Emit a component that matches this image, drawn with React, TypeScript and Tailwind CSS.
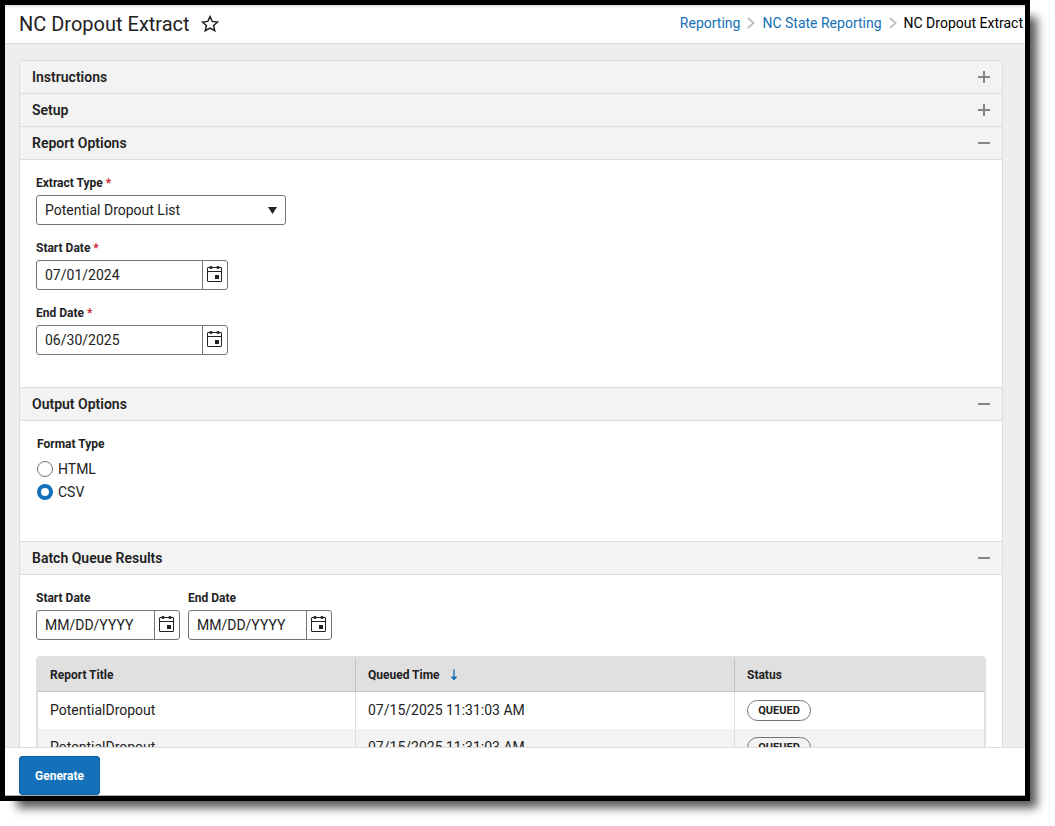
import { useState } from "react";
import type { ReactNode } from "react";

interface BatchRow {
  id: number;
  title: string;
  queued: string;
  status: string;
}

const rows: BatchRow[] = [
  { id: 1, title: "PotentialDropout", queued: "07/15/2025 11:31:03 AM", status: "QUEUED" },
  { id: 2, title: "PotentialDropout", queued: "07/15/2025 11:31:03 AM", status: "QUEUED" },
];

function StarIcon() {
  return (
    <svg viewBox="0 0 18 18" className="h-[18px] w-[18px]" fill="none" stroke="#222" strokeWidth="1.5">
      <path d="M9 1.6 L11.2 6.4 L16.6 7 L12.6 10.5 L13.7 15.7 L9 13 L4.3 15.7 L5.4 10.5 L1.4 7 L6.8 6.4 Z" />
    </svg>
  );
}

function ChevronIcon() {
  return (
    <svg viewBox="0 0 8 12" className="h-3 w-2" fill="none" stroke="#bdbdbd" strokeWidth="1.8">
      <path d="M1 1 L6.5 6 L1 11" />
    </svg>
  );
}

function CalendarIcon() {
  return (
    <svg viewBox="0 0 15 16" className="h-4 w-[15px]">
      <rect x="0.5" y="1.5" width="14" height="14" rx="0.5" fill="none" stroke="#222" />
      <path d="M0 5.5 H15" stroke="#222" />
      <path d="M4 0 V3 M11 0 V3" stroke="#222" strokeWidth="1.4" />
      <path d="M2.5 1.5 H5.5 M9.5 1.5 H12.5" stroke="#222" strokeWidth="1.8" />
      <rect x="8" y="9" width="4" height="4" fill="#222" />
    </svg>
  );
}

function ToggleIcon({ open }: { open: boolean }) {
  return (
    <svg viewBox="0 0 12 12" className="h-3 w-3" stroke="#858585" strokeWidth="2">
      <path d="M0 6 H12" />
      {!open && <path d="M6 0 V12" />}
    </svg>
  );
}

interface SectionProps {
  title: string;
  defaultOpen?: boolean;
  children?: ReactNode;
}

function Section({ title, defaultOpen = false, children }: SectionProps) {
  const [open, setOpen] = useState(defaultOpen);
  return (
    <section>
      <h2 className="border-t border-[#dedede]">
        <button
          type="button"
          aria-expanded={open}
          onClick={() => setOpen((prev) => !prev)}
          className="flex h-8 w-full items-center justify-between bg-[#f3f3f3] px-3 text-sm font-semibold"
        >
          {title}
          <ToggleIcon open={open} />
        </button>
      </h2>
      {open && <div className="border-t border-[#dedede] px-4 pt-[15px]">{children}</div>}
    </section>
  );
}

interface FieldLabelProps {
  htmlFor: string;
  text: string;
  required?: boolean;
}

function FieldLabel({ htmlFor, text, required }: FieldLabelProps) {
  return (
    <label htmlFor={htmlFor} className="text-xs leading-4 font-bold">
      {text}
      {required && <span className="text-[#d0202e]"> *</span>}
    </label>
  );
}

interface DateFieldProps {
  id: string;
  label: string;
  width: string;
  value?: string;
  required?: boolean;
}

function DateField({ id, label, width, value = "", required }: DateFieldProps) {
  return (
    <div className="flex flex-col items-start gap-1">
      <FieldLabel htmlFor={id} text={label} required={required} />
      <div className={`flex h-[30px] rounded-[3px] border border-[#757575] bg-white ${width}`}>
        <input
          id={id}
          type="text"
          defaultValue={value}
          placeholder="MM/DD/YYYY"
          className="min-w-0 flex-1 bg-transparent px-2 text-sm outline-none placeholder:text-[#222]"
        />
        <button
          type="button"
          aria-label={`Open ${label} calendar`}
          className="flex w-[25px] items-center border-l border-[#757575] pb-[2px] pl-1"
        >
          <CalendarIcon />
        </button>
      </div>
    </div>
  );
}

interface FormatRadioProps {
  value: string;
  selected: string;
  onSelect: (value: string) => void;
}

function FormatRadio({ value, selected, onSelect }: FormatRadioProps) {
  return (
    <label className="flex h-[23px] items-center gap-[5px] text-sm">
      <input
        type="radio"
        name="format"
        checked={selected === value}
        onChange={() => onSelect(value)}
        className="h-4 w-4 appearance-none rounded-full border border-[#757575] bg-white checked:border-4 checked:border-[#1470b8]"
      />
      {value}
    </label>
  );
}

function BatchTable() {
  return (
    <div className="mt-4 overflow-hidden rounded-t border-x-2 border-t-2 border-[#e0e0e0]">
      <table className="w-full table-fixed border-separate border-spacing-0 text-left">
        <colgroup>
          <col className="w-[318px]" />
          <col className="w-[379px]" />
          <col />
        </colgroup>
        <thead>
          <tr className="h-[34px] bg-[#e0e0e0] text-xs">
            <th className="border-r border-b border-[#c4c4c4] px-3 font-bold">Report Title</th>
            <th aria-sort="descending" className="border-r border-b border-[#c4c4c4] px-3 font-bold">
              <span className="flex items-center gap-[10px]">
                Queued Time
                <svg viewBox="0 0 8 12" className="h-3 w-2" stroke="#1470b8" strokeWidth="1.4" fill="none">
                  <path d="M4 0.5 V10" />
                  <path d="M1.2 8 H6.8 L4 11 Z" fill="#1470b8" strokeWidth="0.8" />
                </svg>
              </span>
            </th>
            <th className="border-b border-[#c4c4c4] px-3 font-bold">Status</th>
          </tr>
        </thead>
        <tbody>
          {rows.map((row) => (
            <tr key={row.id} className="h-[37px] text-sm odd:bg-white even:bg-[#f3f3f3]">
              <td className="border-r border-[#dedede] px-3 pb-[2px]">{row.title}</td>
              <td className="border-r border-[#dedede] px-3 pb-[2px]">{row.queued}</td>
              <td className="px-3">
                <span className="flex h-[21px] w-16 items-center justify-center rounded-full border border-[#757575] text-[11px] font-bold">
                  {row.status}
                </span>
              </td>
            </tr>
          ))}
        </tbody>
      </table>
    </div>
  );
}

export default function App() {
  const [format, setFormat] = useState("CSV");

  return (
    <div className="h-screen overflow-hidden bg-white pr-[25px] pb-[25px] font-[Roboto,sans-serif] text-[#222]">
      <div className="flex h-full flex-col border-[5px] border-black bg-[#eee] shadow-[12px_12px_9px_-5px_rgba(0,0,0,0.65)]">
        <header className="flex h-[39px] shrink-0 items-center justify-between border-b border-[#dcdcdc] bg-white pr-[2px] pl-[14px] shadow-[inset_0_3px_3px_-2px_rgba(0,0,0,0.2)]">
          <div className="flex items-center gap-[11px]">
            <h1 className="text-xl leading-6">NC Dropout Extract</h1>
            <button type="button" aria-label="Add to favorites">
              <StarIcon />
            </button>
          </div>
          <nav aria-label="Breadcrumb" className="flex items-center gap-[7px] pb-[2px] text-sm leading-5">
            <a href="#reporting" className="text-[#1470b8]">Reporting</a>
            <ChevronIcon />
            <a href="#state-reporting" className="text-[#1470b8]">NC State Reporting</a>
            <ChevronIcon />
            <span className="text-black">NC Dropout Extract</span>
          </nav>
        </header>

        <main className="min-h-0 flex-1 overflow-hidden pt-4 pr-[22px] pl-[14px]">
          <div className="overflow-hidden rounded-t-[3px] border-x border-[#dedede] bg-white">
            <Section title="Instructions" />
            <Section title="Setup" />

            <Section title="Report Options" defaultOpen>
              <div className="flex flex-col gap-[15px] pb-8">
                <div className="flex flex-col items-start gap-1">
                  <FieldLabel htmlFor="extract-type" text="Extract Type" required />
                  <div className="relative w-[250px]">
                    <select
                      id="extract-type"
                      className="h-[30px] w-full appearance-none rounded-[3px] border border-[#757575] bg-white px-2 text-sm"
                    >
                      <option>Potential Dropout List</option>
                    </select>
                    <svg
                      viewBox="0 0 9 7"
                      className="pointer-events-none absolute top-3 right-[9px] h-[7px] w-[9px]"
                      fill="#222"
                    >
                      <path d="M0 0 H9 L4.5 7 Z" />
                    </svg>
                  </div>
                </div>
                <DateField id="start-date" label="Start Date" value="07/01/2024" width="w-48" required />
                <DateField id="end-date" label="End Date" value="06/30/2025" width="w-48" required />
              </div>
            </Section>

            <Section title="Output Options" defaultOpen>
              <fieldset className="flex flex-col items-start pb-[38px] pl-px">
                <legend className="mb-[5px] text-xs leading-4 font-bold">Format Type</legend>
                <FormatRadio value="HTML" selected={format} onSelect={setFormat} />
                <FormatRadio value="CSV" selected={format} onSelect={setFormat} />
              </fieldset>
            </Section>

            <Section title="Batch Queue Results" defaultOpen>
              <div className="flex gap-2">
                <DateField id="batch-start" label="Start Date" width="w-36" />
                <DateField id="batch-end" label="End Date" width="w-36" />
              </div>
              <BatchTable />
            </Section>
          </div>
        </main>

        <footer className="shrink-0 border-y border-t-[#dedede] border-b-[#b0b0b0] bg-white pt-2 pl-[14px]">
          <button
            type="button"
            className="block h-[39px] rounded-[3px] border border-[#0f62a4] bg-[#1470b8] px-[15px] text-xs font-bold text-white"
          >
            Generate
          </button>
        </footer>
      </div>
    </div>
  );
}
